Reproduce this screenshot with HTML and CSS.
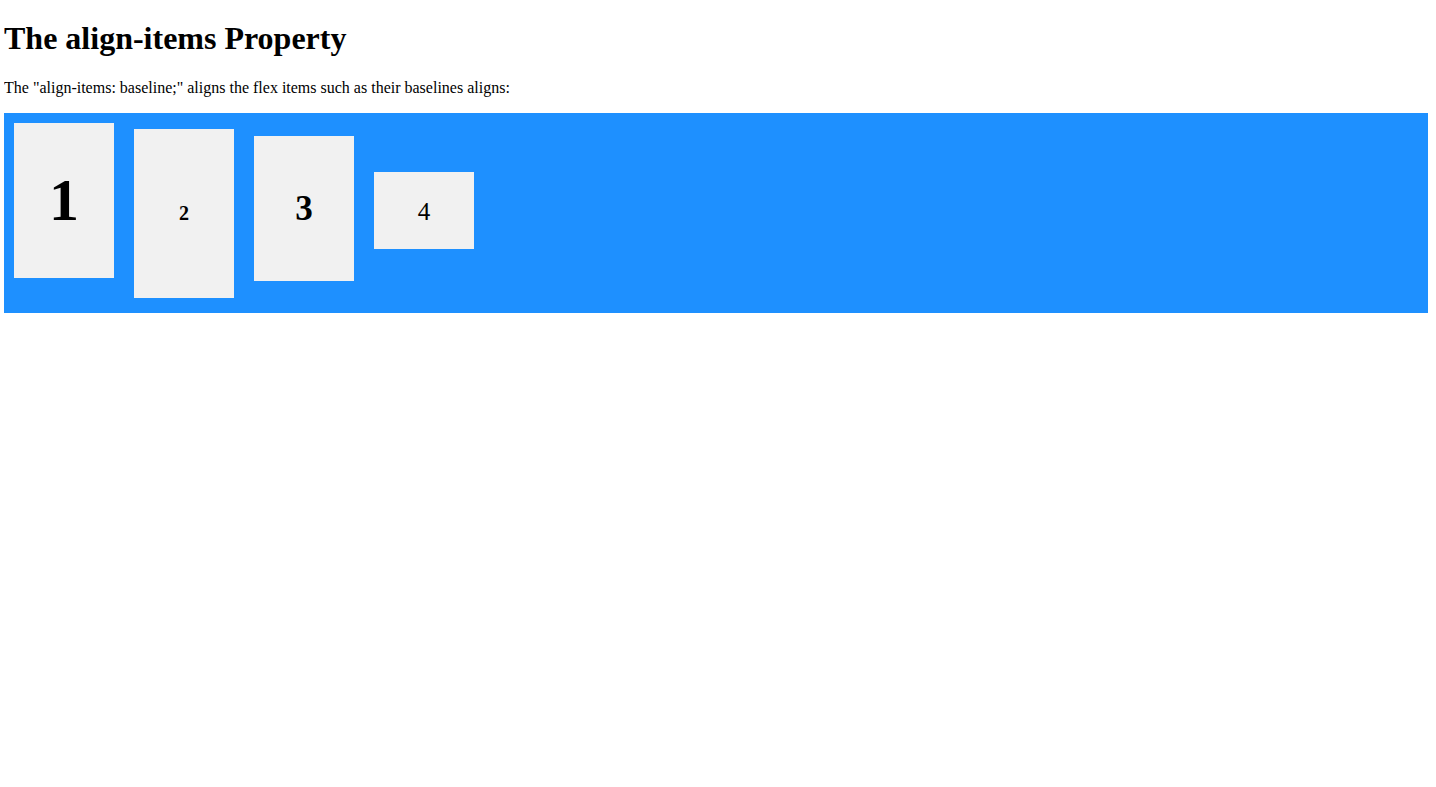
FILE: index.html
```html
<!DOCTYPE html>
<html>
<head>
<meta charset="utf-8">
<link rel="stylesheet" href="styles.css">
</head>
<body>
<h1 class="title">The align-items Property</h1>
<p>The "align-items: baseline;" aligns the flex items such as their baselines aligns:</p>
<div class="flex-container">
  <div><h1>1</h1></div>
  <div><h6>2</h6></div>
  <div><h3>3</h3></div>
  <div><small>4</small></div>
</div>
</body>
</html>
```

FILE: styles.css
```css
body {
  margin: 0 8px 8px 4px;
  font-family: "Liberation Serif", "Times New Roman", serif;
  color: #000;
  background: #fff;
}

.title {
  margin-top: 20.44px;
}

.flex-container {
  display: flex;
  height: 200px;
  align-items: baseline;
  background-color: DodgerBlue;
}

.flex-container > div {
  background-color: #f1f1f1;
  width: 100px;
  margin: 10px;
  text-align: center;
  line-height: 75px;
  font-size: 30px;
}
```
